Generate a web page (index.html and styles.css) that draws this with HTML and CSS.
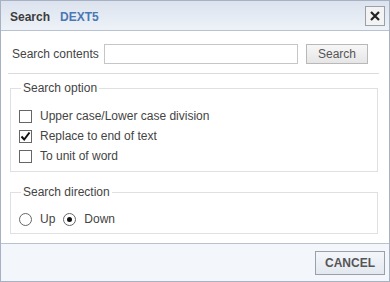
FILE: index.html
```html
<!DOCTYPE html>
<html>
  <head>
    <meta charset="UTF-8" />
    <title>Search</title>
    <link rel="stylesheet" href="styles.css">
  </head>
  <body>
    <div class="dialog">
      <div class="dlg-head">
        <span class="dlg-title">Search</span>
        <span class="dlg-sub">DEXT5</span>
        <button class="dlg-close" title="Close">
          <svg width="12" height="12" viewBox="0 0 12 12">
            <path d="M2 2 L10 10 M10 2 L2 10" stroke="#222" stroke-width="2.2" />
          </svg>
        </button>
      </div>

      <div class="dlg-body">
        <div class="search-row">
          <label for="search_text">Search contents</label>
          <input type="text" id="search_text" />
          <button class="btn">Search</button>
        </div>

        <div class="sep"></div>

        <fieldset class="group">
          <legend>Search option</legend>
          <label class="opt"><span class="chk"></span>Upper case/Lower case division</label>
          <label class="opt"><span class="chk checked">
            <svg width="11" height="11" viewBox="0 0 11 11">
              <path d="M1.5 5.5 L4.2 8.5 L9.5 1.5" fill="none" stroke="#111" stroke-width="2" />
            </svg>
          </span>Replace to end of text</label>
          <label class="opt"><span class="chk"></span>To unit of word</label>
        </fieldset>

        <fieldset class="group dir">
          <legend>Search direction</legend>
          <div class="radios">
            <label class="opt"><span class="radio"></span>Up</label>
            <label class="opt"><span class="radio on"></span>Down</label>
          </div>
        </fieldset>
      </div>

      <div class="dlg-foot">
        <button class="btn cancel">CANCEL</button>
      </div>
    </div>
  </body>
</html>
```

FILE: styles.css
```css
body {
  margin: 0;
  font-family: "Liberation Sans", Arial, sans-serif;
  font-size: 12px;
  color: #444;
  background: #fff;
}
.dialog {
  width: 390px;
  height: 282px;
  box-sizing: border-box;
  border: 1px solid #a8b1c4;
  display: flex;
  flex-direction: column;
}
.dlg-head {
  height: 30px;
  display: flex;
  align-items: center;
  padding: 2px 4px 0 9px;
  box-sizing: border-box;
  background: linear-gradient(#dbe3ee, #eef2f8);
  border-bottom: 1px solid #b9c2d3;
}
.dlg-title {
  font-weight: bold;
  color: #3c3c3c;
}
.dlg-sub {
  font-weight: bold;
  color: #4a78b3;
  margin-left: 10px;
}
.dlg-close {
  margin-left: auto;
  margin-top: -2px;
  width: 20px;
  height: 20px;
  padding: 0;
  border: 1px solid #9aa0aa;
  background: #f3f3f3;
  display: flex;
  align-items: center;
  justify-content: center;
}
.dlg-body {
  flex: 1;
  padding: 0 10px 0 7px;
}
.search-row {
  display: flex;
  align-items: center;
  margin-top: 13px;
  padding-left: 4px;
}
.search-row label {
  width: 92px;
}
.search-row input {
  width: 194px;
  height: 20px;
  box-sizing: border-box;
  border: 1px solid #c6c6c6;
  margin: 0;
}
.btn {
  font-family: "Liberation Sans", Arial, sans-serif;
  font-size: 12px;
  color: #555;
  height: 20px;
  padding: 0;
  border: 1px solid #b8b8b8;
  background: linear-gradient(#f7f7f7, #e6e6e6);
}
.search-row .btn {
  width: 62px;
  margin-left: 8px;
}
.sep {
  height: 1px;
  background: #dcdcdc;
  margin: 9px 0 0 0;
}
.group {
  margin: 7px 1px 0 2px;
  padding: 11px 0 5px 8px;
  border: 1px solid #e0e0e0;
}
.group legend {
  padding: 0 2px;
  margin-left: 2px;
  color: #444;
}
.opt {
  display: flex;
  align-items: center;
  height: 20px;
  color: #444;
}
.chk {
  width: 11px;
  height: 11px;
  border: 1px solid #666;
  margin-right: 8px;
  display: flex;
  align-items: center;
  justify-content: center;
}
.dir {
  margin-top: 13px;
  padding-top: 10px;
  padding-bottom: 4px;
}
.radios {
  display: flex;
  gap: 8px;
}
.radio {
  width: 11px;
  height: 11px;
  border: 1px solid #666;
  border-radius: 50%;
  margin-right: 8px;
  display: flex;
  align-items: center;
  justify-content: center;
}
.radio.on::after {
  content: "";
  width: 5px;
  height: 5px;
  border-radius: 50%;
  background: #111;
}
.dlg-foot {
  height: 37px;
  display: flex;
  align-items: center;
  justify-content: flex-end;
  padding-right: 4px;
  background: #f3f6fb;
  border-top: 1px solid #b9c2d3;
}
.cancel {
  width: 70px;
  height: 24px;
  font-weight: bold;
  color: #555;
  border: 1px solid #9aa0aa;
  background: linear-gradient(#f4f6fa, #e3e8f0);
}
```
